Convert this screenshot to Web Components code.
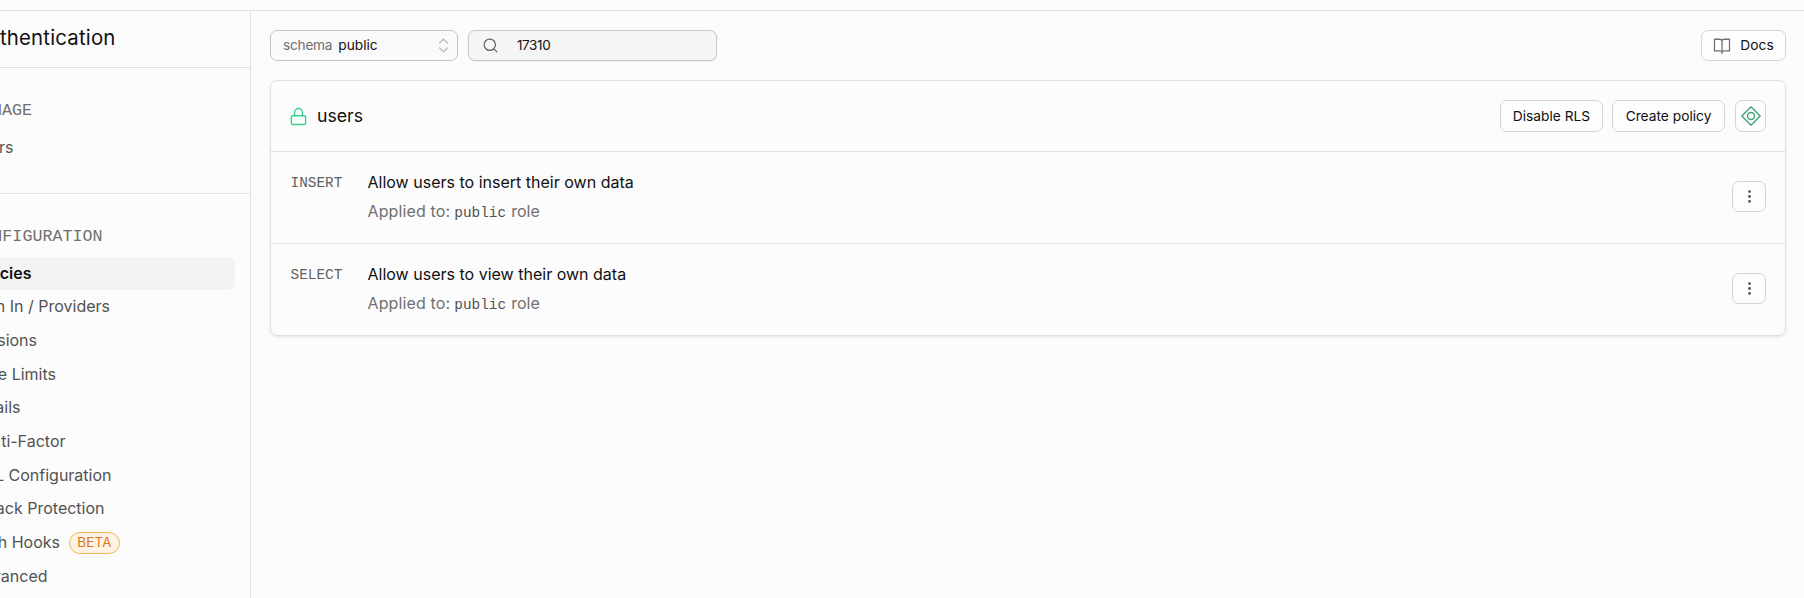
<!DOCTYPE html>
<html lang="en"><head><meta charset="utf-8"><title>Authentication policies</title>
<style>html,body{margin:0;height:100%;overflow:hidden;background:#fcfcfc}body{font-family:Inter,"Liberation Sans",sans-serif;color:#111}</style>
</head><body>
<auth-page></auth-page>
<script>
const define = (name, css, html) => customElements.define(name, class extends HTMLElement {
  constructor() {
    super();
    const t = document.createElement('template');
    t.innerHTML = `<style>*{box-sizing:border-box}:host{box-sizing:border-box}${css}</style>${html}`;
    this.attachShadow({mode: 'open'}).append(t.content.cloneNode(true));
  }
});

const icons = {
  lock: '<rect x="3" y="11" width="18" height="11" rx="1.5"/><path d="M7 11V7a5 5 0 0 1 10 0v4"/>',
  search: '<circle cx="11" cy="11" r="8"/><path d="m21 21-4.3-4.3"/>',
  sort: '<path d="m7 15 5 5 5-5M7 9l5-5 5 5"/>',
  book: '<path d="M12 5.5V22M2 3h7a3 3 0 0 1 3 2.5A3 3 0 0 1 15 3h7v15.5h-7a3 3 0 0 0-3 2 3 3 0 0 0-3-2H2z"/>',
  realtime: '<path d="M12 1 23 12 12 23 1 12z"/><circle cx="12" cy="12" r="4.2"/>',
  dots: '<g fill="currentColor" stroke="none"><circle cx="12" cy="5.7" r="1.75"/><circle cx="12" cy="12" r="1.75"/><circle cx="12" cy="18.3" r="1.75"/></g>'
};
customElements.define('ui-icon', class extends HTMLElement {
  connectedCallback() {
    if (this.shadowRoot) return;
    const s = this.getAttribute('size') || 19;
    this.attachShadow({mode: 'open'}).innerHTML =
      `<style>:host{display:block;flex:none;width:${s}px;height:${s}px}svg{display:block}</style>
      <svg width="${s}" height="${s}" viewBox="0 0 24 24" fill="none" stroke="currentColor" stroke-width="${this.getAttribute('stroke') || 1.5}" stroke-linecap="round" stroke-linejoin="round">${icons[this.getAttribute('name')]}</svg>`;
  }
});

define('ui-button', `:host{display:flex;align-items:center;justify-content:center;height:31px;border:1px solid #d4d4d4;border-radius:7px;background:#fdfdfd;font-size:13.75px;line-height:20px;white-space:nowrap;flex:none}`, '<slot></slot>');

define('nav-title', `:host{display:flex;height:57px;border-bottom:1px solid #dfdfdf;padding-top:13px}
 span{width:115.5px;display:flex;justify-content:flex-end;font-size:20.4px;letter-spacing:.17px;line-height:28px;white-space:nowrap}`, '<span><slot></slot></span>');

define('nav-heading', `:host{display:flex;height:24px;font:16.7px/24px "Liberation Mono",monospace;color:#707070}
 span{width:var(--end);display:flex;justify-content:flex-end;white-space:nowrap}`, '<span><slot></slot></span>');

define('nav-item', `:host{display:flex;align-items:center;height:33px;margin-bottom:.65px;padding-bottom:1.5px;border-radius:0 7px 7px 0;font-size:16px;line-height:24px;color:#525252;gap:9px}
 :host([active]){background:#f3f3f3;color:#111;font-weight:600}
 span{width:var(--end);display:flex;justify-content:flex-end;white-space:nowrap;flex:none}`, '<span><slot></slot></span><slot name="badge"></slot>');

define('ui-badge', `:host{display:flex;align-items:center;justify-content:center;width:51px;height:22px;border:1px solid #f3b65e;border-radius:11px;background:#fef2e3;color:#db761f;font-size:13.3px;line-height:18px;padding-bottom:1px;letter-spacing:.25px;position:relative;top:1px}`, '<slot></slot>');

define('side-nav', `:host{display:block;width:251px;flex:none;border-right:1px solid #dfdfdf;overflow:hidden}
 .a{height:126px;padding:31px 15px 0 0;border-bottom:1px solid #e6e6e6}.a nav-item{margin-top:8px}
 .b{padding:31px 15px 0 0}.b nav-heading{margin-bottom:8px}`,
`<nav-title>Authentication</nav-title>
<div class="a"><nav-heading style="--end:32px">MANAGE</nav-heading><nav-item style="--end:13.5px">Users</nav-item></div>
<div class="b"><nav-heading style="--end:102.5px">CONFIGURATION</nav-heading>
<nav-item active style="--end:31.5px">Policies</nav-item>
<nav-item style="--end:110px">Sign In / Providers</nav-item>
<nav-item style="--end:37px">Sessions</nav-item>
<nav-item style="--end:56px">Rate Limits</nav-item>
<nav-item style="--end:20.5px">Emails</nav-item>
<nav-item style="--end:65.5px">Multi-Factor</nav-item>
<nav-item style="--end:111.5px">URL Configuration</nav-item>
<nav-item style="--end:104.5px">Attack Protection</nav-item>
<nav-item style="--end:60px">Auth Hooks<ui-badge slot="badge">BETA</ui-badge></nav-item>
<nav-item style="--end:47.5px">Advanced</nav-item></div>`);

define('schema-select', `:host{display:flex;align-items:center;width:188px;height:31px;border:1px solid #c4c4c4;border-radius:7px;background:#fafafa;padding:0 4px 0 12px;font-size:13.7px;line-height:20px}
 span{padding-bottom:1px}.k{color:#707070;letter-spacing:-.25px;margin-right:6px}ui-icon{margin-left:auto;color:#b0b0b0}`,
'<span class="k">schema</span><span><slot></slot></span><ui-icon name="sort" size="19"></ui-icon>');

define('search-box', `:host{display:flex;align-items:center;width:249px;height:31px;border:1px solid #c7c7c7;border-radius:7px;background:#f5f5f5;padding:0 12px;font-size:13.5px;line-height:20px;letter-spacing:-.4px;box-shadow:0 1px 2px #0000000d}
 span{padding-bottom:1px}ui-icon{color:#606060;margin:0 18px 0 1px}`,
'<ui-icon name="search" size="17" stroke="1.7"></ui-icon><span><slot></slot></span>');

define('tool-bar', `:host{display:flex;gap:10px;height:31px}ui-button{margin-left:auto;width:85px}ui-button span{padding-bottom:1px}ui-icon{color:#707070;margin-right:9px}`,
`<schema-select>public</schema-select><search-box>17310</search-box>
<ui-button><ui-icon name="book" size="18" stroke="1.7"></ui-icon><span>Docs</span></ui-button>`);

define('policy-row', `:host{display:flex;height:92px;padding:16px 19px 0 19.5px;border-bottom:1px solid #e6e6e6}
 :host(:last-of-type){height:91px;border-bottom:0}
 .m{font:14.4px/28px "Liberation Mono",monospace;width:77px;padding-top:1px;color:#606060}
 .t{font-size:16.03px;line-height:29px;white-space:nowrap}.s{color:#707070}
 .s i{font:14.4px/20px "Liberation Mono",monospace;color:#525252;margin:0 5px 0 4px}
 .s b{font-weight:400;letter-spacing:.13px}
 ui-button{margin:13px 0 0 auto;width:34px}ui-icon{color:#525252}`,
`<div class="m"><slot name="command"></slot></div>
<div class="t"><div><slot></slot></div><div class="s"><b>Applied to:</b><i>public</i>role</div></div>
<ui-button><ui-icon name="dots" size="19"></ui-icon></ui-button>`);

define('policy-card', `:host{display:block;height:256px;border:1px solid #dfdfdf;border-radius:7px;box-shadow:0 1px 3px #0000001a}
 header{display:flex;align-items:center;height:71px;border-bottom:1px solid #dfdfdf;padding:0 19px 0 18px}
 header ui-button{height:32px;padding-bottom:1px}.u{font-size:17.7px;line-height:26px;margin:0 auto 0 9px}
 .l{color:#3ecf8e}.g{color:#3d9f78}`,
`<header><ui-icon class="l" name="lock" size="19" stroke="1.8"></ui-icon><span class="u">users</span>
<ui-button style="width:103px;margin-right:9px">Disable RLS</ui-button><ui-button style="width:113px;margin-right:10px">Create policy</ui-button><ui-button style="width:31px"><ui-icon class="g" name="realtime" size="20" stroke="1.6"></ui-icon></ui-button></header>
<policy-row><span slot="command">INSERT</span>Allow users to insert their own data</policy-row>
<policy-row><span slot="command">SELECT</span>Allow users to view their own data</policy-row>`);

define('auth-page', `:host{display:flex;flex-direction:column;height:598px;width:1804px}
 .top{height:11px;flex:none;border-bottom:1px solid #dfdfdf}.body{display:flex;flex:1;min-height:0}
 main{flex:1;padding:19px 18px 0 19px}policy-card{margin-top:19px}`,
`<div class="top"></div><div class="body"><side-nav></side-nav><main><tool-bar></tool-bar><policy-card></policy-card></main></div>`);
</script></body></html>
